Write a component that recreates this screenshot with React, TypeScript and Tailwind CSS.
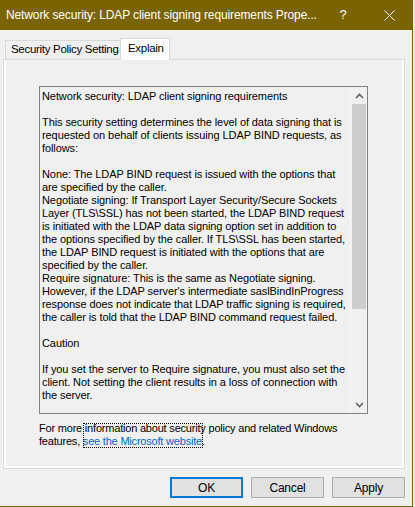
import React from 'react';

const explainLines: string[] = [
    'Network security: LDAP client signing requirements',
    '',
    'This security setting determines the level of data signing that is',
    'requested on behalf of clients issuing LDAP BIND requests, as',
    'follows:',
    '',
    'None: The LDAP BIND request is issued with the options that',
    'are specified by the caller.',
    'Negotiate signing: If Transport Layer Security/Secure Sockets',
    'Layer (TLS\\SSL) has not been started, the LDAP BIND request',
    'is initiated with the LDAP data signing option set in addition to',
    'the options specified by the caller. If TLS\\SSL has been started,',
    'the LDAP BIND request is initiated with the options that are',
    'specified by the caller.',
    'Require signature: This is the same as Negotiate signing.',
    "However, if the LDAP server's intermediate saslBindInProgress",
    'response does not indicate that LDAP traffic signing is required,',
    'the caller is told that the LDAP BIND command request failed.',
    '',
    'Caution',
    '',
    'If you set the server to Require signature, you must also set the',
    'client. Not setting the client results in a loss of connection with',
    'the server.',
];

const Chevron = ({ up }: { up?: boolean }) => (
    <svg width="9" height="6" viewBox="0 0 9 6">
        <path d={up ? 'M1 5 L4.5 1.5 L8 5' : 'M1 1 L4.5 4.5 L8 1'} stroke="#606060" strokeWidth="1.6" fill="none" />
    </svg>
);

const DialogButton: React.FC<{ label: string; isDefault?: boolean }> = ({ label, isDefault }) => (
    <div
        className={`w-[73px] h-[21px] flex items-center justify-center bg-[#e1e1e1] text-[12px] tracking-[-0.2px] text-black ${isDefault ? 'border-2 border-[#0078d7]' : 'border border-[#adadad]'
            }`}
    >
        {label}
    </div>
);

export default function App() {
    return (
        <div className="w-[415px] h-[507px] bg-[#e8e8e8] flex" style={{ fontFamily: '"Liberation Sans", Arial, sans-serif' }}>
            <div className="w-[413px] h-[507px] border-r border-b border-[#7a6400] bg-[#f0f0f0] flex flex-col">
                {/* title bar */}
                <div className="h-[30px] bg-[#7a6400] flex items-center text-white text-[12px] shrink-0">
                    <div className="flex-1 pl-[6px] whitespace-nowrap tracking-[-0.12px]">Network security: LDAP client signing requirements Prope...</div>
                    <div className="w-[46px] h-full flex items-center justify-center text-[13px]">?</div>
                    <div className="w-[46px] h-full flex items-center justify-center">
                        <svg width="11" height="11" viewBox="0 0 11 11">
                            <path d="M0.5 0.5 L10.5 10.5 M10.5 0.5 L0.5 10.5" stroke="#ffffff" strokeWidth="1" />
                        </svg>
                    </div>
                </div>

                {/* tabs */}
                <div className="pl-[5px] pt-[8px] h-[29px] flex items-end text-[11.5px] tracking-[-0.3px] text-black shrink-0">
                    <div className="w-[116px] h-[19px] border-t border-l border-[#d9d9d9] bg-[#f0f0f0] pl-[5px] flex items-center whitespace-nowrap">
                        Security Policy Setting
                    </div>
                    <div className="relative z-10 -ml-px -mb-px w-[50px] h-[22px] border-t border-l border-r border-[#d9d9d9] bg-white pl-[7px] flex items-center pb-[2px]">
                        Explain
                    </div>
                </div>

                {/* tab page */}
                <div className="ml-[3px] w-[402px] h-[410px] border border-[#d9d9d9] bg-white px-[2px] pb-[2px] flex shrink-0">
                    <div className="flex-1 bg-[#f0f0f0] pl-[33px] pt-[26px] flex flex-col">
                        <div className="w-[329px] h-[328px] border border-[#828282] bg-[#f0f0f0] flex">
                            <div className="flex-1 pl-[2px] pt-[3px] text-[11px] leading-[13px] tracking-[-0.09px] text-black overflow-hidden">
                                {explainLines.map((line, i) => (
                                    <div key={i} className="h-[13px] whitespace-pre">{line}</div>
                                ))}
                            </div>
                            <div className="w-[17px] flex flex-col bg-[#f0f0f0] border-l border-[#f8f8f8]">
                                <div className="h-[17px] flex items-center justify-center"><Chevron up /></div>
                                <div className="flex-1 flex flex-col px-px">
                                    <div className="h-[205px] bg-[#cdcdcd]" />
                                </div>
                                <div className="h-[17px] flex items-center justify-center"><Chevron /></div>
                            </div>
                        </div>

                        <div className="relative mt-[8px] text-[11px] leading-[13px] tracking-[-0.2px] text-black">
                            <div>For more information about security policy and related Windows</div>
                            <div>
                                features, <span className="text-[#0066cc]">see the Microsoft website</span>.
                            </div>
                            <div className="absolute left-[44px] top-px w-[120px] h-[25px] border border-dotted border-black" />
                        </div>
                    </div>
                </div>

                {/* buttons */}
                <div className="flex justify-end gap-[8px] pr-[7px] pt-[8px]">
                    <DialogButton label="OK" isDefault />
                    <DialogButton label="Cancel" />
                    <DialogButton label="Apply" />
                </div>
            </div>
        </div>
    );
}
